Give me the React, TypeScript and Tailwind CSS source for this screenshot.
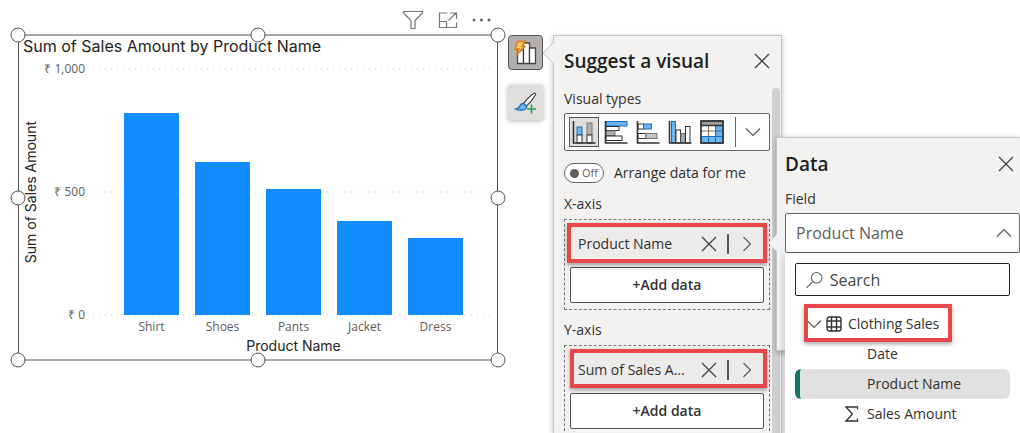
import type { ReactNode } from "react";
import clsx from "clsx";

const sales = [
  { name: "Shirt", amount: 822 },
  { name: "Shoes", amount: 622 },
  { name: "Pants", amount: 512 },
  { name: "Jacket", amount: 382 },
  { name: "Dress", amount: 312 },
];

const AXIS_MAX = 1000;
const ticks = ["₹ 1,000", "₹ 500", "₹ 0"];

const handles = [
  "left-0 top-0",
  "left-1/2 top-0",
  "left-full top-0",
  "left-0 top-1/2",
  "left-full top-1/2",
  "left-0 top-full",
  "left-1/2 top-full",
  "left-full top-full",
];

function CloseIcon() {
  return (
    <svg width="16" height="16" viewBox="0 0 16 16" fill="none" stroke="#444" strokeWidth="1.3">
      <path d="M1 1L15 15M15 1L1 15" />
    </svg>
  );
}

function Chevron({ d, className }: { d: string; className?: string }) {
  return (
    <svg width="16" height="16" viewBox="0 0 16 16" fill="none" stroke="#555" strokeWidth="1.1" className={className}>
      <path d={d} />
    </svg>
  );
}

const DOWN = "M1 4.5L8 11.5L15 4.5";
const UP = "M1 11.5L8 4.5L15 11.5";
const RIGHT = "M4.5 1L11.5 8L4.5 15";

function ChartToolbar() {
  return (
    <div className="flex h-[34px] items-center justify-end gap-3.5 pt-1.5 pr-1.5">
      <button aria-label="Filters">
        <svg width="22" height="20" viewBox="0 0 22 20" fill="none" stroke="#777" strokeWidth="1.2">
          <path d="M1.5 1.5H20.5V3L13 10.5V18.5H9V10.5L1.5 3Z" />
        </svg>
      </button>
      <button aria-label="Focus mode">
        <svg width="20" height="18" viewBox="0 0 20 18" fill="none" stroke="#777" strokeWidth="1.2">
          <path d="M9.5 2H1.5V16.5H18.5V11.5M1.5 10.5H8.5V16.5M10.5 9.5L18 2M12 2H18.5V8" />
        </svg>
      </button>
      <button aria-label="More options">
        <svg width="20" height="18" viewBox="0 0 20 18" fill="#666">
          <circle cx="2" cy="9" r="1.5" />
          <circle cx="9.5" cy="9" r="1.5" />
          <circle cx="17" cy="9" r="1.5" />
        </svg>
      </button>
    </div>
  );
}

function SalesChart() {
  return (
    <figure className="relative border-x border-y-2 border-x-[#555] border-y-[#a6a6a6] pb-1 font-['Inter',sans-serif] text-[#252423]">
      <figcaption className="pl-1 text-base leading-5">Sum of Sales Amount by Product Name</figcaption>
      <div className="mt-[13px] flex">
        <div className="flex h-[246px] w-5 items-center justify-end">
          <span className="rotate-180 text-sm leading-4 whitespace-nowrap [writing-mode:vertical-rl]">
            Sum of Sales Amount
          </span>
        </div>
        <div className="flex h-[246px] w-[46px] flex-col justify-between text-right font-['Open_Sans',sans-serif] text-xs text-[#605e5c]">
          {ticks.map((t) => (
            <span key={t} className="flex h-0 items-center justify-end whitespace-nowrap">
              {t}
            </span>
          ))}
        </div>
        <div className="mr-1.5 ml-2 min-w-0 flex-1">
          <div className="relative h-[246px]">
            <svg className="absolute inset-0 h-full w-full overflow-visible" stroke="#c8c6c4" strokeDasharray="1 5">
              <line x1="0" x2="100%" y1="0" y2="0" />
              <line x1="0" x2="100%" y1="50%" y2="50%" />
              <line x1="0" x2="100%" y1="100%" y2="100%" />
            </svg>
            <div className="relative flex h-full items-end gap-4 pr-7 pl-[31px]">
              {sales.map((s) => (
                <div key={s.name} className="flex-1 bg-[#118dff]" style={{ height: `${(s.amount / AXIS_MAX) * 100}%` }} />
              ))}
            </div>
          </div>
          <div className="flex gap-4 pt-1 pr-7 pl-[31px] font-['Open_Sans',sans-serif] text-xs leading-4 text-[#605e5c]">
            {sales.map((s) => (
              <span key={s.name} className="flex-1 text-center">
                {s.name}
              </span>
            ))}
          </div>
          <p className="mt-[3px] mb-px pr-7 pl-[31px] text-center text-sm leading-4">Product Name</p>
        </div>
      </div>
      <div className="pointer-events-none absolute -inset-px">
        {handles.map((pos) => (
          <span
            key={pos}
            className={clsx("absolute size-[15px] -translate-1/2 rounded-full border border-[#555] bg-white", pos)}
          />
        ))}
      </div>
    </figure>
  );
}

function SideButtons() {
  return (
    <div className="mt-[35px] flex w-[35px] shrink-0 flex-col gap-[15px]">
      <button
        aria-label="Suggest a visual"
        className="flex size-[35px] items-center justify-center rounded-sm border border-[#555] bg-[#b3b0ad]"
      >
        <svg width="26" height="26" viewBox="0 0 26 26">
          <g fill="#fff" stroke="#444" strokeWidth="1.3">
            <path d="M4.5 10H10.5V23.5H4.5Z" />
            <path d="M10.5 3H16.5V23.5H10.5Z" />
            <path d="M16.5 8H22.5V23.5H16.5Z" />
          </g>
          <path d="M5 1.5H12L9 6.5H12L3.5 15L6 9H2Z" fill="#ffc861" stroke="#e07a1b" strokeWidth="1.4" />
        </svg>
      </button>
      <button
        aria-label="Format visual"
        className="flex size-[35px] items-center justify-center rounded-xs bg-[#e1dfdd] shadow-[0_1px_5px_rgba(0,0,0,0.3)]"
      >
        <svg width="24" height="24" viewBox="0 0 24 24">
          <path
            d="M9.5 12.5C13 8 17 4 20.5 2.3C21.5 2 22 2.8 21.5 3.8C19.5 7.5 16 12 12.5 15Z"
            fill="#fff"
            stroke="#444"
            strokeWidth="1.2"
          />
          <path
            d="M9.5 12.3C7.5 12.3 6.3 13.5 5.7 15.3C5 17.2 3.5 17.8 1.5 18C5 19.8 12.5 20 12.7 15.2Z"
            fill="#6bb5f0"
            stroke="#1f6fb5"
            strokeWidth="1.2"
          />
          <path d="M17.5 13.5V22.5M13 18H22" stroke="#2a9d45" strokeWidth="1.5" />
        </svg>
      </button>
    </div>
  );
}

const visuals = [
  {
    label: "Stacked column chart",
    art: (
      <>
        <rect x="5" y="7" width="5" height="8" fill="#69b5f2" stroke="#1b6fb8" />
        <rect x="5" y="15" width="5" height="8" fill="#fff" />
        <rect x="15" y="3" width="5" height="12" fill="#b3b0ad" stroke="#777" />
        <rect x="15" y="15" width="5" height="8" fill="#fff" />
        <path d="M1.5 1V23H23.5" strokeWidth="1.6" fill="none" />
      </>
    ),
  },
  {
    label: "Stacked bar chart",
    art: (
      <>
        <rect x="2" y="1.5" width="21" height="4.5" fill="#69b5f2" stroke="#1b6fb8" />
        <rect x="2" y="6.5" width="13" height="4" fill="#fff" />
        <rect x="2" y="11" width="9" height="4.5" fill="#b3b0ad" stroke="#777" />
        <rect x="2" y="16" width="16" height="4.5" fill="#fff" />
        <path d="M1.5 1V23H23.5" strokeWidth="1.6" fill="none" />
      </>
    ),
  },
  {
    label: "Clustered bar chart",
    art: (
      <>
        <rect x="2" y="4" width="6" height="5" fill="#fff" />
        <rect x="7.5" y="4" width="8" height="5" fill="#69b5f2" stroke="#1b6fb8" />
        <rect x="2" y="13.5" width="8" height="5" fill="#fff" />
        <rect x="10" y="13.5" width="11" height="5" fill="#c8c6c4" stroke="#777" />
        <path d="M1.5 1V23H23.5" strokeWidth="1.6" fill="none" />
      </>
    ),
  },
  {
    label: "Clustered column chart",
    art: (
      <>
        <rect x="3.5" y="1.5" width="4" height="21.5" fill="#69b5f2" stroke="#1b6fb8" />
        <rect x="8" y="10" width="4.5" height="13" fill="#fff" />
        <rect x="13" y="13.5" width="4" height="9.5" fill="#b3b0ad" stroke="#777" />
        <rect x="17.5" y="6.5" width="4.5" height="16.5" fill="#fff" />
        <path d="M1.5 1V23H23.5" strokeWidth="1.6" fill="none" />
      </>
    ),
  },
  {
    label: "Table",
    art: (
      <>
        <rect x="1" y="1" width="22" height="22" fill="#fff" />
        <rect x="1" y="1" width="22" height="4.5" fill="#a19f9d" />
        <path d="M15.5 5.5H23V23H1V16.5H15.5Z" fill="#69b5f2" />
        <path d="M8.5 5.5V16.5M1 11H15.5" stroke="#8a6a50" />
        <path d="M15.5 5.5V23M8.5 16.5V23M15.5 11H23M1 16.5H23" stroke="#1b6fb8" />
        <path d="M1 1H23V23H1ZM1 5.5H23" fill="none" strokeWidth="1.4" />
      </>
    ),
  },
];

function VisualPicker() {
  return (
    <div className="mt-1 flex h-[38px] items-center rounded-xs border border-[#666] bg-white pl-1">
      <div className="flex gap-0.5">
        {visuals.map((v, i) => (
          <button
            key={v.label}
            aria-label={v.label}
            className={clsx(
              "flex size-[30px] items-center justify-center",
              i === 0 && "border border-[#555] bg-[#e1dfdd]",
            )}
          >
            <svg width="24" height="24" viewBox="0 0 24 24" stroke="#333">
              {v.art}
            </svg>
          </button>
        ))}
      </div>
      <span className="ml-2 h-[30px] w-px bg-[#666]" />
      <button aria-label="More visuals" className="flex flex-1 justify-center">
        <Chevron d={DOWN} />
      </button>
    </div>
  );
}

type FieldWellProps = {
  label: string;
  field: string;
  highlight: string;
};

function FieldWell({ label, field, highlight }: FieldWellProps) {
  return (
    <section className="mt-2.5">
      <h3 className="text-sm leading-5">{label}</h3>
      <div className="mt-[5px] flex flex-col gap-[5px] border border-dashed border-[#777] px-[5px] py-1.5">
        <div className="relative flex h-9 items-center rounded-xs border border-[#444] bg-[#edebe9] pl-[7px]">
          <span className="flex-1 text-sm whitespace-nowrap">{field}</span>
          <button aria-label={`Remove ${field}`}>
            <CloseIcon />
          </button>
          <span className="ml-2.5 h-5 w-0.5 bg-[#555]" />
          <button aria-label={`Edit ${field}`} className="mr-2 ml-2.5">
            <Chevron d={RIGHT} />
          </button>
          <Highlight className={highlight} />
        </div>
        <button className="h-9 rounded-xs border border-[#555] bg-white text-sm font-semibold">+Add data</button>
      </div>
    </section>
  );
}

function Highlight({ className }: { className: string }) {
  return (
    <span
      className={clsx(
        "pointer-events-none absolute border-4 border-[#e8474c] shadow-[0_2px_4px_rgba(0,0,0,0.35)]",
        className,
      )}
    />
  );
}

function PanelHeader({ title, children }: { title: string; children?: ReactNode }) {
  return (
    <header className="flex h-[50px] items-center justify-between">
      <h2 className="text-[19px] leading-6 font-semibold text-[#201f1e]">{title}</h2>
      <button aria-label={`Close ${title}`}>
        <CloseIcon />
      </button>
      {children}
    </header>
  );
}

function SuggestPanel() {
  return (
    <aside className="relative mt-[35px] w-[229px] shrink-0 border border-b-0 border-[#c8c6c4] bg-[#f3f2f1] pr-[11px] pl-2.5 shadow-[0_2px_6px_rgba(0,0,0,0.25)]">
      <svg className="absolute top-1 -left-3" width="13" height="26" viewBox="0 0 13 26">
        <path d="M13 1L1 13L13 25Z" fill="#f3f2f1" />
        <path d="M12 2L1 13L12 24" fill="none" stroke="#c8c6c4" />
      </svg>
      <PanelHeader title="Suggest a visual" />
      <p className="mt-[3px] text-sm leading-5">Visual types</p>
      <VisualPicker />
      <label className="relative mt-[11px] flex h-[22px] items-center">
        <input
          type="checkbox"
          role="switch"
          className="h-5 w-10 appearance-none rounded-full border border-[#666] bg-white"
        />
        <span className="absolute left-1.5 size-[9px] rounded-full bg-[#605e5c]" />
        <span className="absolute left-[18px] text-[11px] text-[#605e5c]">Off</span>
        <span className="ml-2.5 text-sm whitespace-nowrap">Arrange data for me</span>
      </label>
      <FieldWell label="X-axis" field="Product Name" highlight="-inset-x-1 -top-1 -bottom-0.5" />
      <FieldWell label="Y-axis" field="Sum of Sales A..." highlight="-left-px -right-1 -top-1 -bottom-px" />
      <span className="absolute top-[52px] right-px bottom-0 w-2 rounded-t-full bg-[#d2d0ce]" />
    </aside>
  );
}

const fields = [
  { name: "Date", numeric: false },
  { name: "Product Name", numeric: false },
  { name: "Sales Amount", numeric: true },
];

function FieldMenu() {
  return (
    <div className="absolute inset-x-0 top-full bg-white px-2.5 pt-2.5 pb-6 shadow-[0_3px_8px_rgba(0,0,0,0.25)]">
      <label className="flex h-[33px] items-center rounded-xs border border-[#222] bg-white pl-2.5">
        <svg width="20" height="20" viewBox="0 0 20 20" fill="none" stroke="#605e5c" strokeWidth="1.2">
          <circle cx="12" cy="7.5" r="6" />
          <path d="M7.7 11.8L0.5 19" />
        </svg>
        <input
          type="search"
          aria-label="Search"
          placeholder="Search"
          className="ml-1.5 w-full min-w-0 text-base outline-none placeholder:text-[#484644]"
        />
      </label>
      <ul className="mt-[13px] text-sm">
        <li className="relative flex h-[30px] items-center pl-[11px]">
          <Chevron d={DOWN} />
          <svg className="ml-1" width="16" height="16" viewBox="0 0 16 16" fill="none" stroke="#333" strokeWidth="1.4">
            <rect x="1" y="1" width="14" height="14" rx="2.5" />
            <path d="M5.5 1V15M10.5 1V15M1 5H15M1 11H15" />
          </svg>
          <span className="ml-1.5">Clothing Sales</span>
          <Highlight className="-top-[5px] left-[9px] h-[38px] w-[148px]" />
        </li>
        {fields.map((f) => {
          const selected = f.name === "Product Name";
          return (
            <li
              key={f.name}
              className={clsx(
                "flex h-[30px] items-center rounded-md border-l-5",
                selected ? "border-[#117865] bg-[#e0e0e0]" : "border-transparent",
              )}
            >
              <span className="flex w-[67px] justify-end pr-2">
                {f.numeric && (
                  <svg width="14" height="16" viewBox="0 0 14 16" fill="none" stroke="#333" strokeWidth="1.3">
                    <path d="M12.5 3.5V1H1L7.5 8L1 15H12.5V12.5" />
                  </svg>
                )}
              </span>
              {f.name}
            </li>
          );
        })}
      </ul>
    </div>
  );
}

function DataPanel() {
  return (
    <aside className="relative z-10 mt-[137px] -ml-1.5 min-h-[214px] w-[244px] shrink-0 self-start border border-r-0 border-[#c8c6c4] bg-[#f3f2f1] pl-2 shadow-[0_2px_6px_rgba(0,0,0,0.3)]">
      <svg className="absolute top-[94px] -left-2" width="9" height="22" viewBox="0 0 9 22">
        <path d="M9 1L0 11L9 21Z" fill="#f3f2f1" />
      </svg>
      <div className="pt-px pr-1.5">
        <PanelHeader title="Data" />
      </div>
      <label htmlFor="field" className="block text-sm leading-5">
        Field
      </label>
      <div className="relative mt-1">
        <select
          id="field"
          className="block h-10 w-full appearance-none rounded-xs border border-[#666] bg-white pl-2.5 text-base text-[#605e5c]"
        >
          <option>Product Name</option>
        </select>
        <Chevron d={UP} className="pointer-events-none absolute top-3 right-2" />
        <FieldMenu />
      </div>
    </aside>
  );
}

export default function App() {
  return (
    <main className="flex h-screen overflow-hidden bg-white font-['Open_Sans',sans-serif] text-[#323130]">
      <div className="mr-2.5 ml-[18px] min-w-0 flex-1">
        <ChartToolbar />
        <SalesChart />
      </div>
      <SideButtons />
      <div className="w-2.5 shrink-0" />
      <SuggestPanel />
      <DataPanel />
    </main>
  );
}
